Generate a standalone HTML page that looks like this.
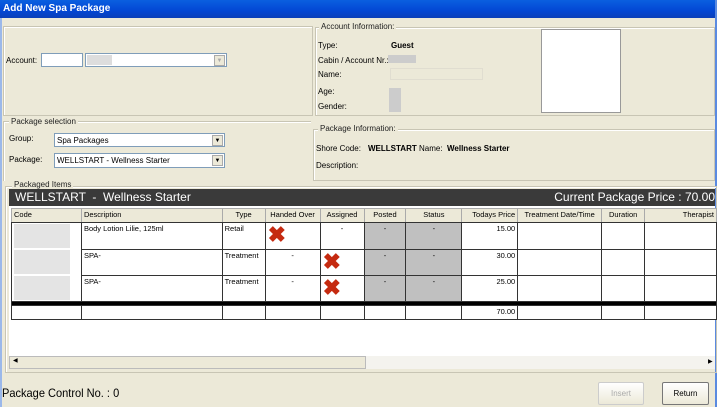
<!DOCTYPE html>
<html><head><style>
*{margin:0;padding:0;box-sizing:border-box}
body{width:717px;height:407px;overflow:hidden;background:#ece9d8;font-family:"Liberation Sans",sans-serif;font-size:8px;color:#000;position:relative}
.a{position:absolute}
.title{left:0;top:0;width:717px;height:18px;background:linear-gradient(#0a5fe0,#0347d4 60%,#0a3fb8);color:#fff;font-weight:bold;font-size:10px;padding:3px 0 0 3px}
.grp{border:1px solid #c8c5b4;box-shadow:inset 1px 1px 0 #fff}
.lg{background:#ece9d8;padding:0 2px;color:#222}
.inp{background:#fff;border:1px solid #7f9db9}
.dd{position:absolute;right:1px;top:1px;width:11px;height:11px;background:#ece9d8;border:1px solid #aaa;font-size:6px;text-align:center;line-height:10px}
table{border-collapse:collapse;position:absolute;left:11px;top:208px;table-layout:fixed;background:#fff}
td,th{border:1px solid #333;font-size:7.5px;font-weight:normal;padding:1px 2px;vertical-align:top;overflow:hidden;white-space:nowrap}
th{background:#ece9d8;border:1px solid #aaa;height:14px;border-bottom:1px solid #333}
tr.r td{height:26px}
.g{background:#c0c0c0;text-align:center}
.c{text-align:center}.rt{text-align:right}
.x{color:#c52a10;font-size:22px;font-weight:bold;line-height:22px}
.btn{border:1px solid #777;border-radius:2px;background:linear-gradient(#fff,#ece9d8);text-align:center;font-size:8px;padding-top:6px;height:23px}
</style></head><body>
<div class="a title">Add New Spa Package</div>
<div class="a" style="left:715px;top:0;width:2px;height:407px;background:#5a8ae0"></div>
<div class="a" style="left:0;top:18px;width:2px;height:389px;background:#9bb8ea"></div>

<div class="a grp" style="left:3px;top:26px;width:310px;height:90px"></div>
<div class="a" style="left:6px;top:56px">Account:</div>
<div class="a inp" style="left:41px;top:53px;width:42px;height:14px"></div>
<div class="a inp" style="left:85px;top:53px;width:142px;height:14px"><div class="a" style="left:1px;top:1px;width:25px;height:10px;background:#ddd"></div><div class="dd" style="color:#aaa">▼</div></div>

<div class="a grp" style="left:315px;top:27px;width:400px;height:89px"></div>
<div class="a lg" style="left:319px;top:22px">Account Information:</div>
<div class="a" style="left:318px;top:41px">Type:</div>
<div class="a" style="left:391px;top:41px;font-weight:bold">Guest</div>
<div class="a" style="left:318px;top:56px">Cabin / Account Nr.:</div>
<div class="a" style="left:388px;top:55px;width:28px;height:8px;background:#ccc"></div>
<div class="a" style="left:318px;top:70px">Name:</div>
<div class="a" style="left:390px;top:68px;width:93px;height:12px;border:1px solid #e0ddd0"></div>
<div class="a" style="left:318px;top:87px">Age:</div>
<div class="a" style="left:318px;top:102px">Gender:</div>
<div class="a" style="left:389px;top:88px;width:12px;height:24px;background:#ccc"></div>
<div class="a" style="left:541px;top:29px;width:80px;height:84px;background:#fff;border:1px solid #999"></div>

<div class="a grp" style="left:3px;top:121px;width:308px;height:60px;border-right:none;border-bottom:none"></div>
<div class="a lg" style="left:9px;top:117px">Package selection</div>
<div class="a" style="left:9px;top:134px">Group:</div>
<div class="a inp" style="left:54px;top:133px;width:171px;height:14px;padding:2px 0 0 2px">Spa Packages<div class="dd">▼</div></div>
<div class="a" style="left:9px;top:155px">Package:</div>
<div class="a inp" style="left:54px;top:153px;width:171px;height:15px;padding:2px 0 0 2px">WELLSTART - Wellness Starter<div class="dd">▼</div></div>

<div class="a grp" style="left:313px;top:129px;width:402px;height:52px"></div>
<div class="a lg" style="left:318px;top:124px">Package Information:</div>
<div class="a" style="left:316px;top:144px">Shore Code:</div>
<div class="a" style="left:368px;top:144px;font-weight:bold">WELLSTART</div>
<div class="a" style="left:419px;top:144px">Name:</div>
<div class="a" style="left:447px;top:144px;font-weight:bold">Wellness Starter</div>
<div class="a" style="left:316px;top:161px">Description:</div>

<div class="a grp" style="left:5px;top:186px;width:712px;height:187px"></div>
<div class="a lg" style="left:12px;top:180px">Packaged Items</div>
<div class="a" style="left:9px;top:189px;width:706px;height:17px;background:#3a3a3a;color:#fff;font-size:12px;padding:1px 0 0 6px;overflow:hidden;white-space:nowrap">WELLSTART &nbsp;- &nbsp;Wellness Starter<span style="position:absolute;right:0;top:1px">Current Package Price : 70.00</span></div>
<div class="a" style="left:9px;top:206px;width:706px;height:162px;background:#fff"></div>
<table>
<colgroup><col style="width:70px"><col style="width:141px"><col style="width:43px"><col style="width:55px"><col style="width:44px"><col style="width:42px"><col style="width:56px"><col style="width:56px"><col style="width:84px"><col style="width:43px"><col style="width:72px"></colgroup>
<tr><th style="text-align:left">Code</th><th style="text-align:left">Description</th><th>Type</th><th>Handed Over</th><th>Assigned</th><th>Posted</th><th>Status</th><th class="rt">Todays Price</th><th>Treatment Date/Time</th><th>Duration</th><th class="rt">Therapist</th></tr>
<tr class="r"><td style="border-bottom:none"><div style="width:56px;height:24px;background:#e4e4e4"></div></td><td>Body Lotion Lilie, 125ml</td><td>Retail</td><td><span class="x">✖</span></td><td class="c">-</td><td class="g">-</td><td class="g">-</td><td class="rt">15.00</td><td></td><td></td><td></td></tr>
<tr class="r"><td style="border-top:none;border-bottom:none"><div style="width:56px;height:24px;background:#e4e4e4"></div></td><td>SPA-</td><td>Treatment</td><td class="c">-</td><td><span class="x">✖</span></td><td class="g">-</td><td class="g">-</td><td class="rt">30.00</td><td></td><td></td><td></td></tr>
<tr class="r"><td style="border-top:none"><div style="width:56px;height:24px;background:#e4e4e4"></div></td><td>SPA-</td><td>Treatment</td><td class="c">-</td><td><span class="x">✖</span></td><td class="g">-</td><td class="g">-</td><td class="rt">25.00</td><td></td><td></td><td></td></tr>
<tr><td colspan="11" style="height:4px;padding:0;background:#000"></td></tr>
<tr><td style="height:14px"></td><td></td><td></td><td></td><td></td><td></td><td></td><td class="rt">70.00</td><td></td><td></td><td></td></tr>
</table>
<div class="a" style="left:9px;top:356px;width:706px;height:13px;background:#f4f3ee"></div>
<div class="a" style="left:9px;top:356px;width:357px;height:13px;background:#ece9d8;border:1px solid #bbb;font-size:6px;padding-left:3px">◀</div>
<div class="a" style="left:708px;top:358px;font-size:6px">▶</div>

<div class="a" style="left:2px;top:386px;font-size:12px;transform:scaleX(0.92);transform-origin:left">Package Control No. : 0</div>
<div class="a btn" style="left:598px;top:382px;width:46px;color:#aaa;border-color:#ccc">Insert</div>
<div class="a btn" style="left:662px;top:382px;width:47px">Return</div>
</body></html>
